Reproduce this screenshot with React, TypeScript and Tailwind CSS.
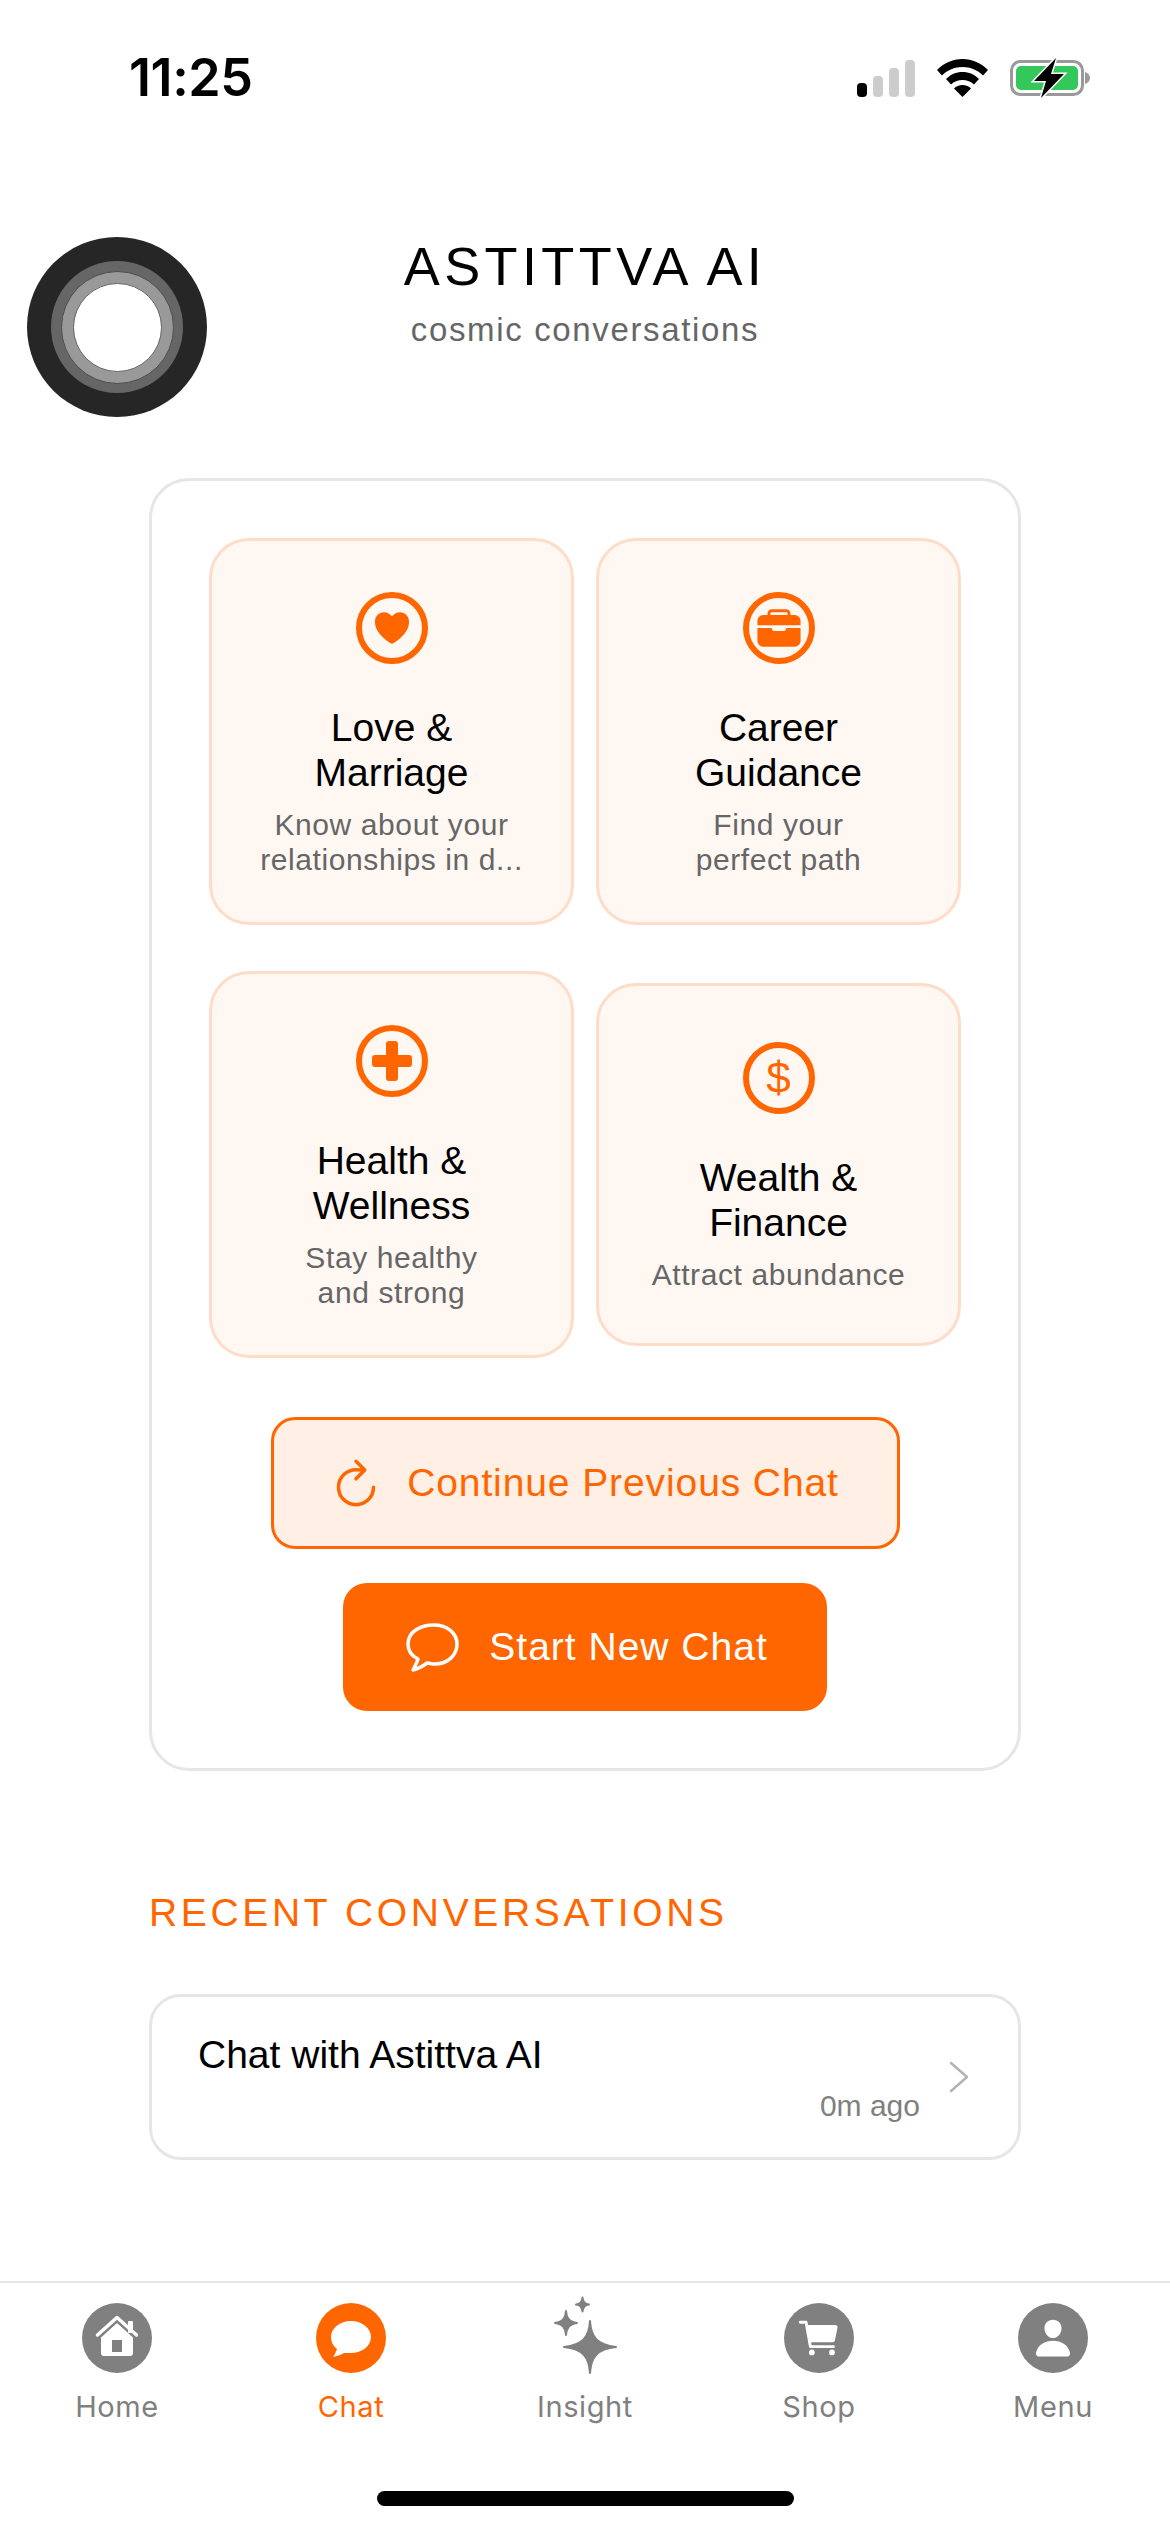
import { IoBriefcase, IoCart, IoHeart, IoPerson, IoRefreshOutline } from "react-icons/io5";
import type { ReactNode } from "react";

const sans = "font-['Liberation_Sans',Arial,sans-serif]";

function StatusBar() {
  return (
    <div className="flex h-[237px] items-start justify-between pl-[129px] pr-[80px] pt-[58px]">
      <span className="font-['Inter',sans-serif] text-[52px] font-semibold leading-[40px] tracking-[-0.4px] text-black">11:25</span>
      <div className="flex items-center gap-[22px]">
        <div className="flex h-[38px] items-end gap-[6px]">
          <span className="h-[14px] w-[10px] rounded-[4px] bg-black" />
          <span className="h-[21px] w-[10px] rounded-[4px] bg-[#cccccc]" />
          <span className="h-[29px] w-[10px] rounded-[4px] bg-[#cccccc]" />
          <span className="h-[37px] w-[10px] rounded-[4px] bg-[#cccccc]" />
        </div>
        <svg width="51" height="38" viewBox="0 0 51 38">
          <path d="M25.5 0C15.5 0 7 4 0 11l5 5.5C10.5 11 17.5 8 25.5 8s15 3 20.5 8.500l5-5.500C44 4 35.500 0 25.500 0z" fill="#000" />
          <path d="M25.500 13c-6.500 0-12 2.500-16.500 7l5 5.500c3-3 7-4.500 11.500-4.500s8.500 1.500 11.500 4.500l5-5.500C37.500 15.500 32 13 25.500 13z" fill="#000" />
          <path d="M25.500 26c-3.500 0-6.500 1.300-8.500 3.500L25.500 38 34 29.500C32 27.300 29 26 25.500 26z" fill="#000" />
        </svg>
        <svg width="80" height="40" viewBox="0 0 80 40">
          <rect x="1.500" y="3.500" width="71" height="33" rx="9" fill="none" stroke="#999999" strokeWidth="3" />
          <path d="M75 14c3 1 5 3 5 6s-2 5-5 6z" fill="#999999" />
          <rect x="6" y="8" width="62" height="24" rx="5" fill="#34c759" />
          <path d="M46 0 24 23h12l-5 17 23-24H41z" fill="#000" stroke="#fff" strokeWidth="3" paintOrder="stroke" />
        </svg>
      </div>
    </div>
  );
}

function Logo() {
  return (
    <div className="flex h-[180px] w-[180px] items-center justify-center rounded-full bg-[#262626]">
      <div className="flex h-[132px] w-[132px] items-center justify-center rounded-full bg-[#666666]">
        <div className="flex h-[113px] w-[113px] items-center justify-center rounded-full border border-[#4d4d4d] bg-[#999999]">
          <div className="h-[89px] w-[89px] rounded-full border border-[#666666] bg-white" />
        </div>
      </div>
    </div>
  );
}

function Header() {
  return (
    <div className="grid h-[241px] grid-cols-[1fr_auto_1fr] items-start pl-[27px]">
      <Logo />
      <div className="flex flex-col items-center pr-[27px]">
        <h1 className={`${sans} text-[54px] font-normal leading-[58px] tracking-[4.4px] text-black`}>ASTITTVA AI</h1>
        <p className={`${sans} mt-[16px] text-[33px] leading-[38px] tracking-[1.65px] text-[#666666]`}>cosmic conversations</p>
      </div>
      <div />
    </div>
  );
}

type Topic = { icon: ReactNode; title: string[]; sub: string[]; short?: boolean };

const topics: Topic[] = [
  { icon: <IoHeart size={42} />, title: ["Love &", "Marriage"], sub: ["Know about your", "relationships in d..."] },
  { icon: <IoBriefcase size={46} />, title: ["Career", "Guidance"], sub: ["Find your", "perfect path"] },
  {
    icon: (
      <svg width="40" height="40" viewBox="0 0 40 40" fill="currentColor">
        <path d="M14 3a3 3 0 0 1 3-3h6a3 3 0 0 1 3 3v11h11a3 3 0 0 1 3 3v6a3 3 0 0 1-3 3H26v11a3 3 0 0 1-3 3h-6a3 3 0 0 1-3-3V26H3a3 3 0 0 1-3-3v-6a3 3 0 0 1 3-3h11z" />
      </svg>
    ),
    title: ["Health &", "Wellness"],
    sub: ["Stay healthy", "and strong"],
  },
  {
    icon: <span className={`${sans} text-[44px] leading-none`}>$</span>,
    title: ["Wealth &", "Finance"],
    sub: ["Attract abundance"],
    short: true,
  },
];

function TopicCard({ topic }: { topic: Topic }) {
  return (
    <div
      className={`flex w-[365px] flex-col items-center rounded-[40px] border-[3px] border-[#ffdcc7] bg-[#fff7f2] text-center ${
        topic.short ? "pb-[51px] pt-[56px]" : "pb-[45px] pt-[51px]"
      }`}
    >
      <div className="flex h-[72px] w-[72px] items-center justify-center rounded-full border-[6px] border-[#ff6600] text-[#ff6600]">
        {topic.icon}
      </div>
      <div className={`${sans} mt-[41px] text-[39px] leading-[45px] text-black`}>
        {topic.title.map((l) => (
          <div key={l}>{l}</div>
        ))}
      </div>
      <div className={`${sans} mt-[12px] text-[30px] leading-[35px] tracking-[0.6px] text-[#666666]`}>
        {topic.sub.map((l) => (
          <div key={l}>{l}</div>
        ))}
      </div>
    </div>
  );
}

function MainCard() {
  return (
    <div className="mx-[149px] flex h-[1293px] flex-col items-center rounded-[40px] border-[3px] border-[#e6e6e6] px-[58px] pt-[57px]">
      <div className="grid grid-cols-[365px_365px] items-center gap-x-[22px] gap-y-[46px]">
        {topics.map((t) => (
          <TopicCard key={t.title[0]} topic={t} />
        ))}
      </div>
      <button className="mt-[59px] flex h-[132px] w-[629px] items-center justify-center gap-[23px] rounded-[24px] border-[3px] border-[#ff6600] bg-[#ffefe5] pr-[3px] text-[#ff6600]">
        <IoRefreshOutline size={56} />
        <span className={`${sans} text-[39px] tracking-[0.9px]`}>Continue Previous Chat</span>
      </button>
      <button className="mt-[34px] flex h-[128px] w-[484px] items-center justify-center gap-[30px] rounded-[24px] bg-[#ff6600] pl-[4px] text-white">
        <svg width="53" height="49" viewBox="0 0 53 49" fill="none" stroke="currentColor" strokeWidth="3.500" strokeLinejoin="round">
          <path d="M28 2C14 2 2 9 2 21c0 7 4 12 10 15-1 4-3 7-5 11 5-1 10-4 14-7 2 0 5 1 8 1 13 0 22-9 22-20S41 2 28 2z" />
        </svg>
        <span className={`${sans} text-[39px] tracking-[1px]`}>Start New Chat</span>
      </button>
    </div>
  );
}

function Recent() {
  return (
    <div className="mx-[149px] mt-[119px]">
      <h2 className={`${sans} text-[39px] font-normal leading-[45px] tracking-[3.650px] text-[#ff6600]`}>RECENT CONVERSATIONS</h2>
      <div className="mt-[59px] flex h-[166px] items-center rounded-[32px] border-[3px] border-[#e6e6e6] pl-[46px] pr-[49px]">
        <div className="flex-1 self-stretch pt-[35px]">
          <div className={`${sans} text-[39px] leading-[45px] text-black`}>Chat with Astittva AI</div>
          <div className={`${sans} mt-[11px] pr-[29px] text-right text-[30px] leading-[35px] text-[#808080]`}>0m ago</div>
        </div>
        <svg width="20" height="32" viewBox="0 0 20 32" fill="none" stroke="#b3b3b3" strokeWidth="2.500" strokeLinecap="round" strokeLinejoin="round">
          <path d="M2 2l16 14L2 30" />
        </svg>
      </div>
    </div>
  );
}

function Badge({ color, children }: { color: string; children: ReactNode }) {
  return (
    <div className={`flex h-[70px] w-[70px] items-center justify-center rounded-full text-white ${color}`}>
      {children}
    </div>
  );
}

const HomeGlyph = (
  <svg width="70" height="70" viewBox="0 0 70 70" fill="currentColor">
    <path d="M15.500 32 35 14.500 54.500 32" fill="none" stroke="currentColor" strokeWidth="3.500" strokeLinecap="round" strokeLinejoin="round" />
    <rect x="46" y="18" width="5" height="12" rx="1" />
    <path fillRule="evenodd" d="M35 20 51 34.500V50a3 3 0 0 1-3 3H22a3 3 0 0 1-3-3V34.500zM30 37h10v12H30z" />
  </svg>
);

const ChatGlyph = (
  <svg width="70" height="70" viewBox="0 0 70 70" fill="currentColor">
    <path d="M35 18c-11 0-20 7-20 16 0 5 2 9 6 12-1 3-2 5-4 8 4-1 8-2 11-4h7c11 0 20-7 20-16s-9-16-20-16z" />
  </svg>
);

const SparkGlyph = (
  <svg width="64" height="78" viewBox="0 0 64 78" fill="currentColor" stroke="currentColor" strokeWidth="2" strokeLinejoin="round" className="-mt-[6px] text-[#808080]">
    <path d="M37 25C38 41 44 49 63 51 44 53 38 61 37 77 36 61 30 53 11 51 30 49 36 41 37 25z" />
    <path d="M13 15c.5 7 3 11 11 12-8 1-10.500 5-11 12-.5-7-3-11-11-12 8-1 10.500-5 11-12z" />
    <path d="M29.500 1.500c.3 4 2 6.500 6.500 7-4.500.5-6.200 3-6.500 7-.3-4-2-6.500-6.500-7 4.500-.5 6.200-3 6.500-7z" />
  </svg>
);

const tabs: { label: string; active?: boolean; icon: ReactNode }[] = [
  { label: "Home", icon: <Badge color="bg-[#808080]">{HomeGlyph}</Badge> },
  { label: "Chat", active: true, icon: <Badge color="bg-[#ff6600]">{ChatGlyph}</Badge> },
  { label: "Insight", icon: SparkGlyph },
  { label: "Shop", icon: <Badge color="bg-[#808080]"><IoCart size={46} /></Badge> },
  { label: "Menu", icon: <Badge color="bg-[#808080]"><IoPerson size={42} /></Badge> },
];

function TabBar() {
  return (
    <div className="mt-[121px] h-[250px] border-t-2 border-[#e6e6e6]">
      <div className="grid grid-cols-5 pt-[20px]">
        {tabs.map((t) => (
          <div key={t.label} className="flex flex-col items-center">
            <div className="flex h-[70px] items-center justify-center">{t.icon}</div>
            <span
              className={`mt-[16px] font-['Inter',sans-serif] text-[29px] leading-[35px] tracking-[0.6px] ${t.active ? "text-[#ff6600]" : "text-[#808080]"}`}
            >
              {t.label}
            </span>
          </div>
        ))}
      </div>
      <div className="mx-auto mt-[67px] h-[15px] w-[417px] rounded-full bg-black" />
    </div>
  );
}

export default function App() {
  return (
    <div className="h-[2532px] w-[1170px] overflow-hidden bg-white">
      <StatusBar />
      <Header />
      <MainCard />
      <Recent />
      <TabBar />
    </div>
  );
}
